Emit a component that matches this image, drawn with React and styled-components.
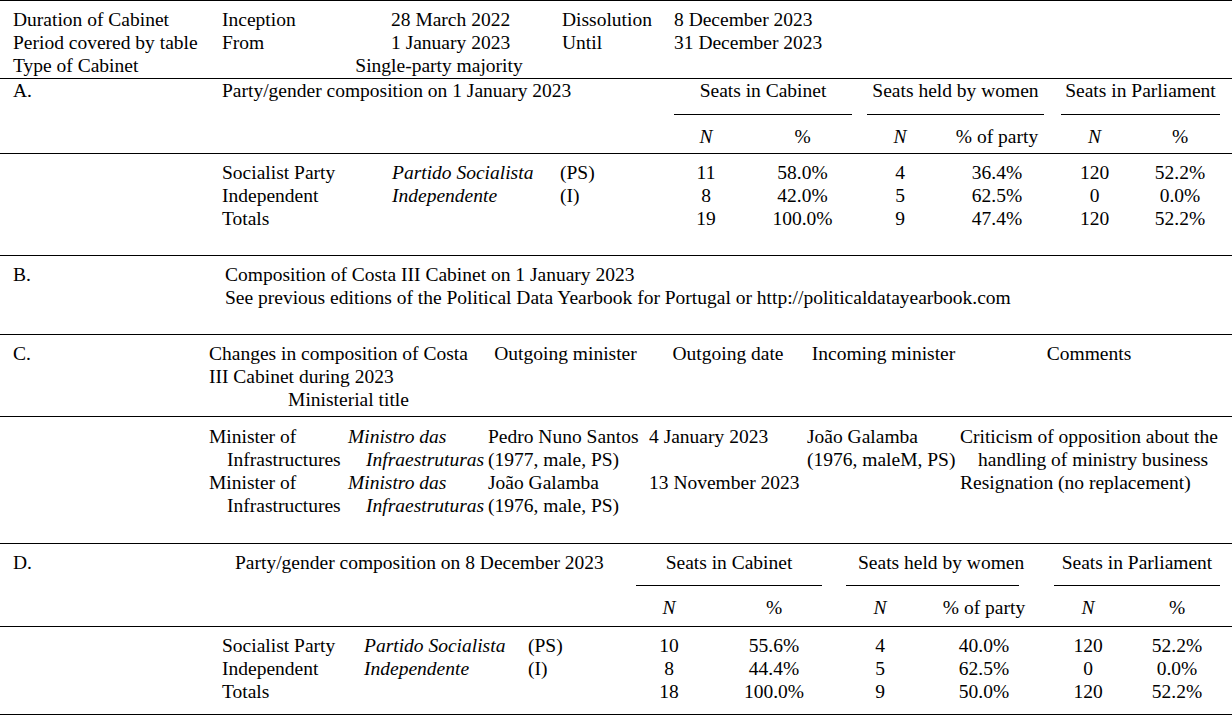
import React from 'react';
import styled, { createGlobalStyle } from 'styled-components';

const GlobalStyle = createGlobalStyle`
  html, body { margin: 0; padding: 0; background: #fff; }
`;

const Page = styled.div`
  width: 1232px;
  font-family: "Liberation Serif", "Times New Roman", serif;
  font-size: 19.5px;
  line-height: 23px;
  color: #000;
`;

const Band = styled.section`
  display: grid;
  grid-template-columns: ${(p) => p.$cols};
  row-gap: ${(p) => p.$gap || 0}px;
  align-items: start;
  border-top: 1px solid #000;
  ${(p) => (p.$last ? 'border-bottom: 1px solid #000;' : '')}
  padding: ${(p) => p.$pt}px 0 ${(p) => p.$pb}px 13px;
`;

const Cell = styled.div`
  grid-column: ${(p) => p.$col || 'auto'};
  text-align: ${(p) => p.$align || 'left'};
  font-style: ${(p) => (p.$italic ? 'italic' : 'normal')};
  padding-left: ${(p) => p.$pl || 0}px;
  padding-right: ${(p) => p.$pr || 0}px;
  white-space: nowrap;
`;

const Hang = styled.div`
  grid-column: ${(p) => p.$col || 'auto'};
  font-style: ${(p) => (p.$italic ? 'italic' : 'normal')};
  padding-left: 18px;
  text-indent: -18px;
  white-space: nowrap;
`;

const Wrap = styled.div`
  grid-column: ${(p) => p.$col || 'auto'};
`;

const SubTitle = styled.div`
  text-align: center;
`;

const GroupHead = styled.div`
  grid-column: ${(p) => p.$col};
  text-align: center;
  white-space: nowrap;
  border-bottom: 1px solid #000;
  padding-bottom: ${(p) => p.$below}px;
  padding-left: ${(p) => p.$pl || 0}px;
  margin-right: ${(p) => p.$mr}px;
`;

const partiesA = [
  ['Socialist Party', 'Partido Socialista', '(PS)', '11', '58.0%', '4', '36.4%', '120', '52.2%'],
  ['Independent', 'Independente', '(I)', '8', '42.0%', '5', '62.5%', '0', '0.0%'],
  ['Totals', '', '', '19', '100.0%', '9', '47.4%', '120', '52.2%'],
];

const partiesD = [
  ['Socialist Party', 'Partido Socialista', '(PS)', '10', '55.6%', '4', '40.0%', '120', '52.2%'],
  ['Independent', 'Independente', '(I)', '8', '44.4%', '5', '62.5%', '0', '0.0%'],
  ['Totals', '', '', '18', '100.0%', '9', '50.0%', '120', '52.2%'],
];

const colsTop = '209px 169px 171px 112px 1fr';
const colsA = '209px 170px 168px 114px 64px 129px 66px 128px 67px 1fr';
const colsD = '209px 142px 164px 108px 66px 144px 68px 140px 68px 1fr';
const colsB = '212px 1fr';
const colsC = '196px 139px 140px 161px 158px 153px 1fr';

function CompositionHead({ letter, title, titlePad, below, margins, womenPad }) {
  return (
    <>
      <Cell $col="1">{letter}</Cell>
      <Cell $col="2 / 5" $pl={titlePad}>{title}</Cell>
      <GroupHead $col="5 / 7" $below={below} $mr={margins[0]}>Seats in Cabinet</GroupHead>
      <GroupHead $col="7 / 9" $below={below} $mr={margins[1]} $pl={womenPad}>Seats held by women</GroupHead>
      <GroupHead $col="9 / 11" $below={below} $mr={margins[2]}>Seats in Parliament</GroupHead>
      <Cell $col="5" $align="center" $italic>N</Cell>
      <Cell $col="6" $align="center">%</Cell>
      <Cell $col="7" $align="center" $italic>N</Cell>
      <Cell $col="8" $align="center">% of party</Cell>
      <Cell $col="9" $align="center" $italic>N</Cell>
      <Cell $col="10" $align="center">%</Cell>
    </>
  );
}

function PartyRows({ rows }) {
  return rows.map((r) => (
    <React.Fragment key={r[0]}>
      <Cell $col="2">{r[0]}</Cell>
      <Cell $col="3" $italic>{r[1]}</Cell>
      <Cell $col="4">{r[2]}</Cell>
      {r.slice(3).map((v, i) => (
        <Cell key={i} $col={String(5 + i)} $align="center">{v}</Cell>
      ))}
    </React.Fragment>
  ));
}

const changes = [
  {
    out: ['Pedro Nuno Santos', '(1977, male, PS)'],
    date: '4 January 2023',
    inc: ['João Galamba', '(1976, maleM, PS)'],
    comment: ['Criticism of opposition about the', 'handling of ministry business'],
  },
  {
    out: ['João Galamba', '(1976, male, PS)'],
    date: '13 November 2023',
    inc: null,
    comment: ['Resignation (no replacement)'],
  },
];

export default function App() {
  return (
    <>
      <GlobalStyle />
      <Page>
        <Band $cols={colsTop} $pt={7} $pb={1}>
          <Cell>Duration of Cabinet</Cell>
          <Cell>Inception</Cell>
          <Cell>28 March 2022</Cell>
          <Cell>Dissolution</Cell>
          <Cell>8 December 2023</Cell>
          <Cell>Period covered by table</Cell>
          <Cell>From</Cell>
          <Cell>1 January 2023</Cell>
          <Cell>Until</Cell>
          <Cell>31 December 2023</Cell>
          <Cell $col="1">Type of Cabinet</Cell>
          <Cell $col="2 / 5" $align="center" $pr={18}>Single-party majority</Cell>
        </Band>

        <Band $cols={colsA} $pt={0} $pb={5} $gap={10}>
          <CompositionHead
            letter="A."
            title="Party/gender composition on 1 January 2023"
            titlePad={0}
            below={12}
            margins={[15, 17, 12]}
            womenPad={0}
          />
        </Band>
        <Band $cols={colsA} $pt={7} $pb={25}>
          <PartyRows rows={partiesA} />
        </Band>

        <Band $cols={colsB} $pt={7} $pb={25}>
          <Cell>B.</Cell>
          <Cell>Composition of Costa III Cabinet on 1 January 2023</Cell>
          <Cell $col="2">See previous editions of the Political Data Yearbook for Portugal or http://politicaldatayearbook.com</Cell>
        </Band>

        <Band $cols={colsC} $pt={7} $pb={5}>
          <Cell>C.</Cell>
          <Wrap $col="2 / 4">
            Changes in composition of Costa III Cabinet during 2023
            <SubTitle>Ministerial title</SubTitle>
          </Wrap>
          <Cell $align="center" $pr={6}>Outgoing minister</Cell>
          <Cell $align="center">Outgoing date</Cell>
          <Cell $align="center">Incoming minister</Cell>
          <Cell $align="center" $pr={14}>Comments</Cell>
        </Band>
        <Band $cols={colsC} $pt={8} $pb={26}>
          {changes.map((c, i) => (
            <React.Fragment key={i}>
              <Hang $col="2">Minister of<br />Infrastructures</Hang>
              <Hang $col="3" $italic>Ministro das<br />Infraestruturas</Hang>
              <Cell $col="4">{c.out[0]}<br />{c.out[1]}</Cell>
              <Cell $col="5">{c.date}</Cell>
              <Cell $col="6">{c.inc ? (<>{c.inc[0]}<br />{c.inc[1]}</>) : null}</Cell>
              <Hang $col="7">
                {c.comment[0]}
                {c.comment[1] ? (<><br />{c.comment[1]}</>) : null}
              </Hang>
            </React.Fragment>
          ))}
        </Band>

        <Band $cols={colsD} $pt={7} $pb={7} $gap={10}>
          <CompositionHead
            letter="D."
            title="Party/gender composition on 8 December 2023"
            titlePad={13}
            below={11}
            margins={[24, 35, 12]}
            womenPad={12}
          />
        </Band>
        <Band $cols={colsD} $pt={7} $pb={11} $last>
          <PartyRows rows={partiesD} />
        </Band>
      </Page>
    </>
  );
}
